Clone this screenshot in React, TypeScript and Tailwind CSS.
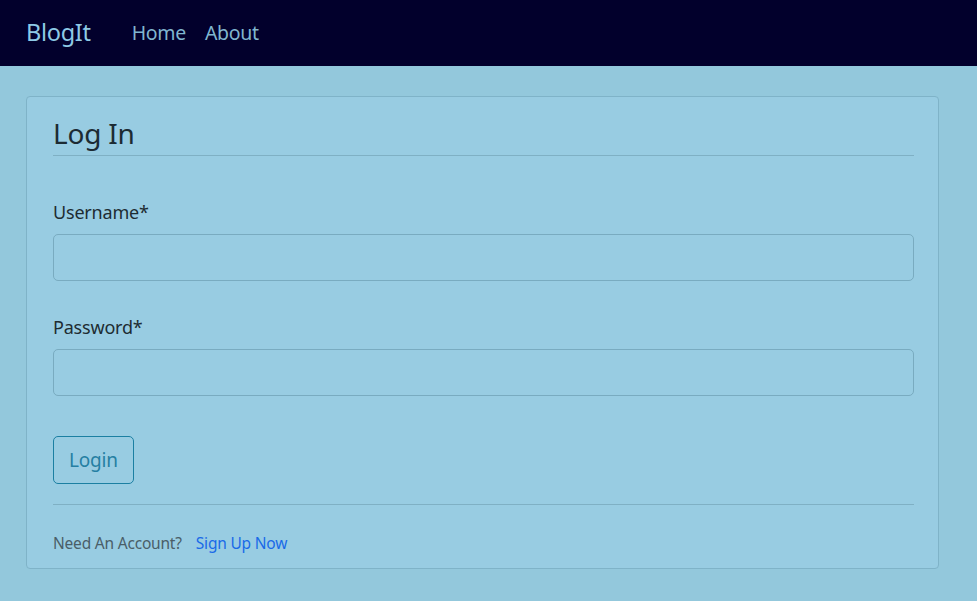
export default function App() {
  return (
    <div className="min-h-[601px] bg-[#93c8dc]" style={{ fontFamily: '"Noto Sans", "Open Sans", sans-serif' }}>
      <nav className="h-[66px] bg-[#02002c] flex items-center px-[26px]">
        <span className="text-[23.5px] text-[#8ecae6] mr-[41px] tracking-[-0.3px]">BlogIt</span>
        <div className="flex gap-[19px] text-[19.5px] text-[#80b6cf] tracking-[-0.3px]">
          <a href="#">Home</a>
          <a href="#">About</a>
        </div>
      </nav>

      <div className="pt-[30px] pl-[26px] pr-[38px] pb-[32px]">
        <div className="border border-[#7fb3c8] rounded-[4px] bg-[#98cce2] pl-[26px] pr-[24px] pt-[18px] pb-[15px]">
          <h1 className="text-[28px] text-[#1c2b33] leading-[36px] pb-[4px] border-b border-[#7fb0c4] tracking-[-0.2px]">Log In</h1>

          <form className="pt-[44px]">
            <label className="block text-[18px] text-[#1e2c32] leading-[24px] mb-[10px] tracking-[-0.2px]">Username*</label>
            <input className="block w-full h-[47px] rounded-[5px] border border-[#79abc0] bg-[#98cce2] outline-none" />

            <label className="block text-[18px] text-[#1e2c32] leading-[24px] mt-[34px] mb-[10px] tracking-[-0.2px]">Password*</label>
            <input type="password" className="block w-full h-[47px] rounded-[5px] border border-[#79abc0] bg-[#98cce2] outline-none" />

            <button type="button" className="mt-[40px] h-[48px] px-[15px] rounded-[5px] border border-[#1b7fa2] text-[#257fa3] text-[19px] tracking-[-0.2px]">Login</button>
          </form>

          <div className="mt-[20px] border-t border-[#7fb0c4] pt-[28px] text-[15.5px] leading-[20px] flex gap-[14px] tracking-[-0.2px]">
            <span className="text-[#4a5e68]">Need An Account?</span>
            <a href="#" className="text-[#1a6ae8]">Sign Up Now</a>
          </div>
        </div>
      </div>
    </div>
  )
}
